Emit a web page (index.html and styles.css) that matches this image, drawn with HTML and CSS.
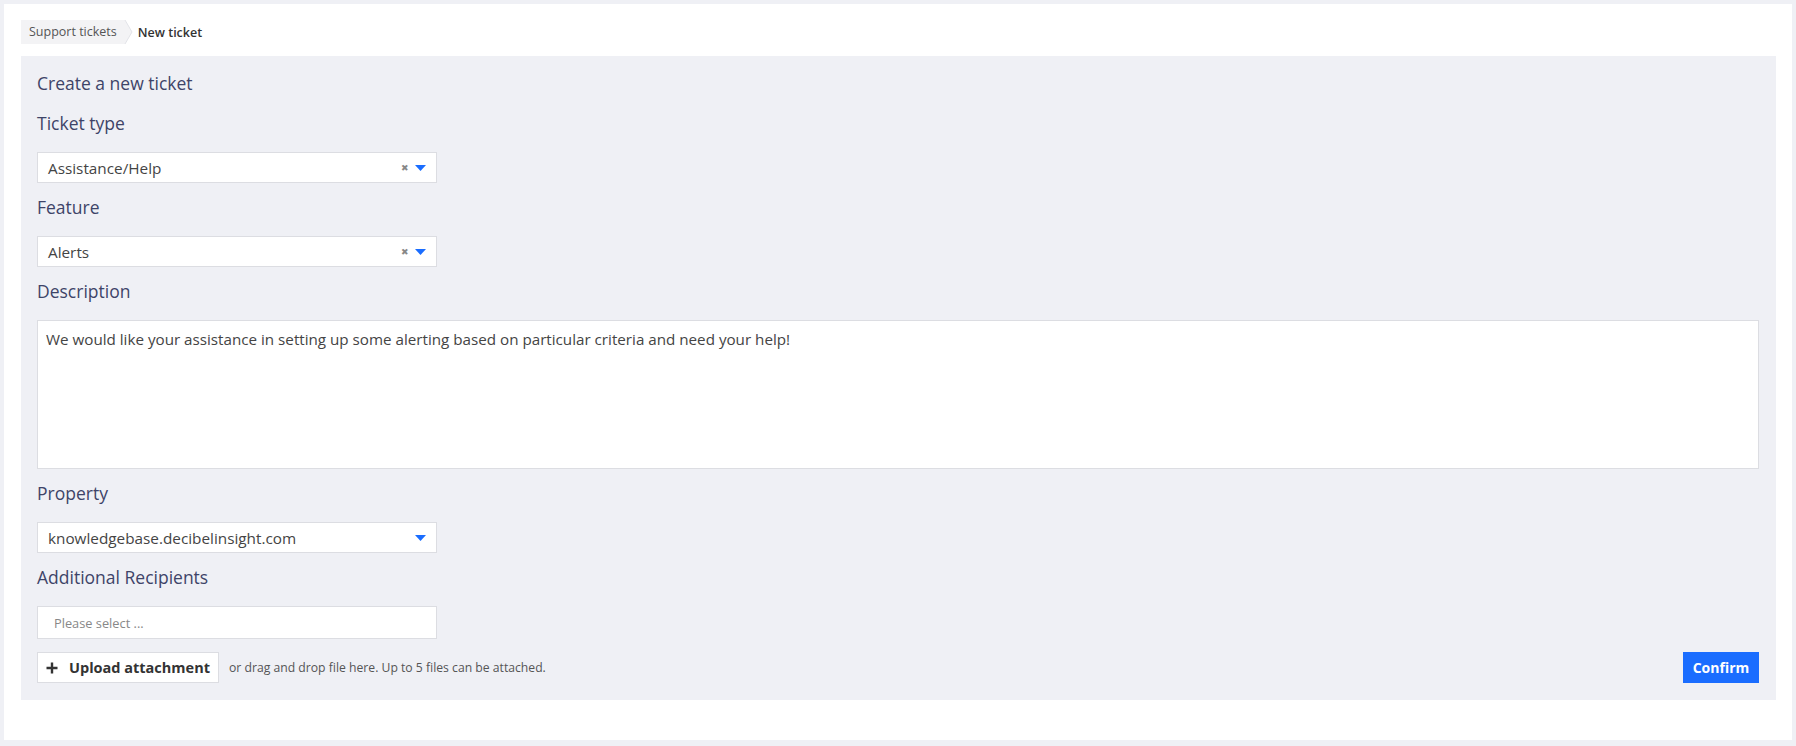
FILE: index.html
```html
<!DOCTYPE html>
<html>
<head>
<meta charset="utf-8">
<link rel="stylesheet" href="styles.css">
</head>
<body>
<div class="card">
  <nav class="crumbs">
    <span class="crumb">Support tickets</span>
    <svg class="crumb-arrow" width="10" height="24" viewBox="0 0 10 24"><polygon points="0,0 2,0 9,12 2,24 0,24" fill="#f3f3f5"/><polyline points="2,0 9,12 2,24" fill="none" stroke="#e2e3e8" stroke-width="1"/></svg>
    <span class="crumb-current">New ticket</span>
  </nav>
  <section class="panel">
    <h1 class="title">Create a new ticket</h1>
    <label class="label">Ticket type</label>
    <div class="select">
      <span class="value">Assistance/Help</span>
      <span class="clear">&#x2716;</span>
      <svg class="caret" width="11" height="6" viewBox="0 0 11 6"><polygon points="0,0 11,0 5.5,6" fill="#1a6dff"/></svg>
    </div>
    <label class="label">Feature</label>
    <div class="select">
      <span class="value">Alerts</span>
      <span class="clear">&#x2716;</span>
      <svg class="caret" width="11" height="6" viewBox="0 0 11 6"><polygon points="0,0 11,0 5.5,6" fill="#1a6dff"/></svg>
    </div>
    <label class="label">Description</label>
    <div class="textarea">We would like your assistance in setting up some alerting based on particular criteria and need your help!</div>
    <label class="label">Property</label>
    <div class="select">
      <span class="value">knowledgebase.decibelinsight.com</span>
      <svg class="caret" width="11" height="6" viewBox="0 0 11 6"><polygon points="0,0 11,0 5.5,6" fill="#1a6dff"/></svg>
    </div>
    <label class="label">Additional Recipients</label>
    <div class="select multi">
      <span class="placeholder">Please select ...</span>
    </div>
    <div class="actions">
      <button class="upload"><svg width="12" height="12" viewBox="0 0 12 12"><path d="M6 0.5V11.5M0.5 6H11.5" stroke="#333" stroke-width="2.4"/></svg><span>Upload attachment</span></button>
      <span class="hint">or drag and drop file here. Up to 5 files can be attached.</span>
      <button class="confirm">Confirm</button>
    </div>
  </section>
</div>
</body>
</html>
```
FILE: styles.css
```css
html, body { margin: 0; padding: 0; }
body {
  margin: 4px;
  background: #eff0f5;
  font-family: "Open Sans", Lato, sans-serif;
}
.card {
  background: #fff;
  height: 736px;
  box-sizing: border-box;
  padding: 16px 16px 40px 17px;
}
.crumbs {
  display: flex;
  align-items: center;
  height: 24px;
  font-size: 12.5px;
}
.crumb {
  background: #f3f3f5;
  height: 24px;
  line-height: 24px;
  padding: 0 6px 0 8px;
  color: #555;
}
.crumb-arrow { display: block; }
.crumb-current {
  margin-left: 5px;
  font-weight: 600;
  color: #333;
}
.panel {
  margin-top: 12px;
  background: #eff0f5;
  padding: 15px 17px 17px 16px;
  display: flex;
  flex-direction: column;
}
.title {
  margin: 0 0 16px;
  font-size: 17.5px;
  font-weight: 400;
  line-height: 24px;
  color: #3e4468;
}
.label {
  display: block;
  font-size: 17.5px;
  line-height: 24px;
  color: #3e4468;
  margin-bottom: 17px;
}
.select + .label, .textarea + .label { margin-top: 12px; }
.select {
  width: 400px;
  height: 31px;
  box-sizing: border-box;
  background: #fff;
  border: 1px solid #dcdde2;
  display: flex;
  align-items: center;
  padding: 0 10px 0 10px;
  font-size: 15.3px;
  color: #444;
}
.select .value { flex: 1; }
.select .clear {
  font-size: 9px;
  color: #888;
  margin-right: 6px;
}
.select.multi { height: 33px; padding-left: 16px; }
.placeholder { color: #888; font-size: 12.8px; }
.textarea {
  height: 149px;
  box-sizing: border-box;
  background: #fff;
  border: 1px solid #dcdde2;
  padding: 8px 8px;
  font-size: 15.2px;
  line-height: 20px;
  color: #444;
}
.actions {
  display: flex;
  align-items: center;
  margin-top: 13px;
}
.upload {
  height: 31px;
  width: 182px;
  background: #fff;
  border: 1px solid #dcdde2;
  display: flex;
  align-items: center;
  padding: 0 0 0 8px;
  gap: 11px;
  font-family: inherit;
  font-size: 14.5px;
  font-weight: 700;
  color: #333;
}
.hint {
  margin-left: 10px;
  font-size: 12.2px;
  color: #555;
  flex: 1;
}
.confirm {
  height: 31px;
  width: 76px;
  border: none;
  background: #1a6dff;
  color: #fff;
  font-family: inherit;
  font-size: 14px;
  font-weight: 700;
}
```
